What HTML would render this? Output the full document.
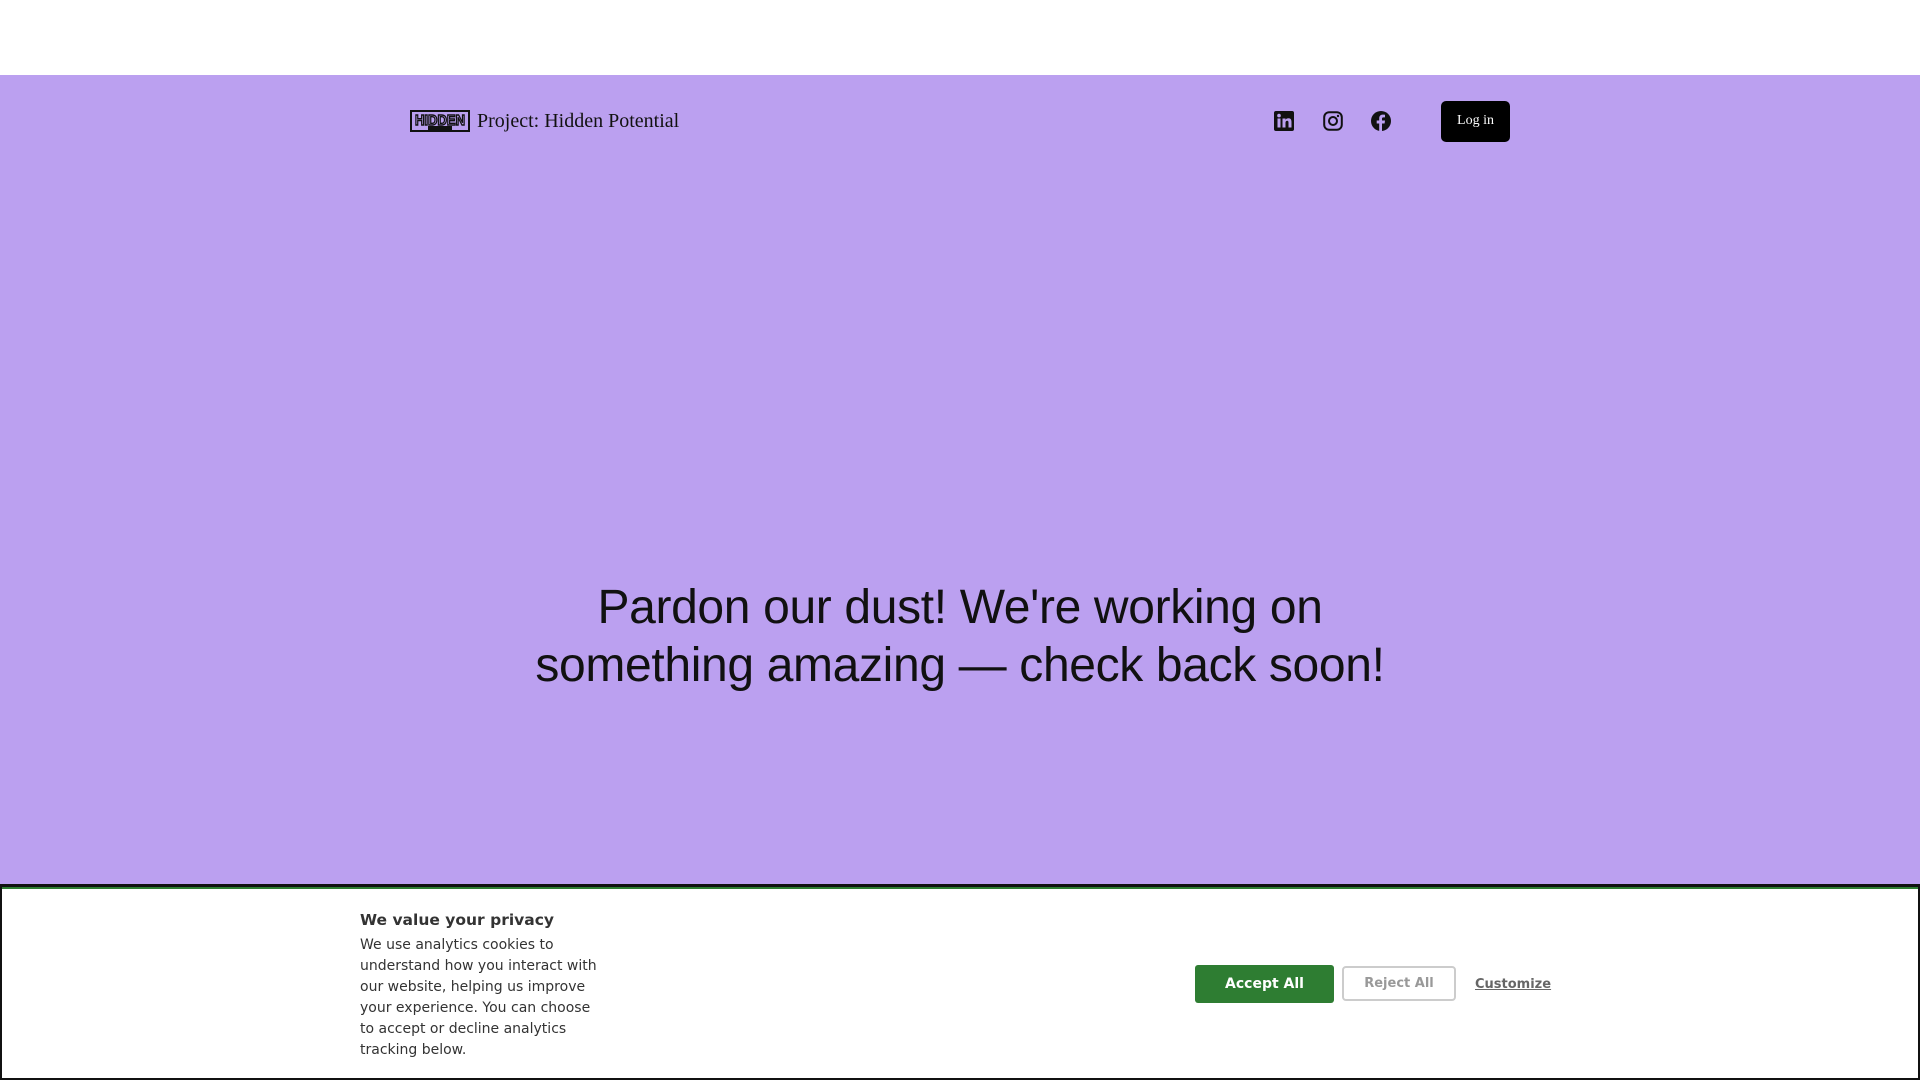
<!DOCTYPE html>
<html><head><meta charset="utf-8"><style>
*{margin:0;padding:0;box-sizing:border-box}
body{width:1920px;height:1080px;overflow:hidden;background:#fff;position:relative;font-family:"Liberation Sans",sans-serif}
.hero{position:absolute;top:75px;left:0;width:1920px;height:812px;background:#bba0f0}
.brand{position:absolute;left:410px;top:109px;display:flex;align-items:center}
.brand span{font-family:"Liberation Serif",serif;font-size:20px;color:#111;margin-left:7px}
.ic{position:absolute;top:111px;width:20px;height:20px}
.login{position:absolute;left:1441px;top:101px;width:69px;height:41px;background:#000;border-radius:5px;color:#fff;font-family:"Liberation Serif",serif;font-size:14px;text-align:center;line-height:40px}
h1{position:absolute;left:0;width:1920px;top:579px;text-align:center;font-weight:400;font-size:48px;line-height:58px;color:#111;letter-spacing:-0.35px}
.banner{position:absolute;left:0;top:884px;width:1920px;height:196px;background:#fff;border:2px solid #111;border-top:3px solid #111;box-shadow:inset 0 2px 0 #2e7d32}
.txt{position:absolute;left:358px;top:24px;width:240px;font-family:"DejaVu Sans",sans-serif;color:#333}
.txt b{display:block;font-size:15.5px;margin-bottom:6px}
.txt p{font-size:14px;line-height:21px}
.btn{position:absolute;font-family:"DejaVu Sans",sans-serif;font-weight:bold;font-size:14px;text-align:center}
</style></head><body>
<div class="hero"></div>
<div class="brand">
<svg width="60" height="24" viewBox="0 0 60 24"><path d="M1 2h58v20H1z" fill="none" stroke="#111" stroke-width="2"/><text x="30" y="16" text-anchor="middle" font-family="Liberation Sans" font-weight="bold" font-size="15" fill="#bba0f0" stroke="#111" stroke-width="1.4" textLength="50" lengthAdjust="spacingAndGlyphs">HIDDEN</text><rect x="18" y="17" width="24" height="4" fill="#111"/></svg>
<span>Project: Hidden Potential</span></div>
<svg class="ic" style="left:1274px" viewBox="0 0 20 20"><rect x="0" y="0" width="20" height="20" rx="2" fill="#111"/><rect x="3.5" y="7.5" width="3" height="9" fill="#bba0f0"/><circle cx="5" cy="4.6" r="1.8" fill="#bba0f0"/><path d="M8.5 7.5h3v1.4c.6-1 1.7-1.6 3-1.6 2.3 0 3 1.5 3 3.8v5.4h-3v-4.8c0-1.1-.3-1.9-1.3-1.9-1 0-1.7.7-1.7 1.9v4.8h-3z" fill="#bba0f0"/></svg>
<svg class="ic" style="left:1323px" viewBox="0 0 20 20"><rect x="1.2" y="1.2" width="17.6" height="17.6" rx="5" fill="none" stroke="#111" stroke-width="2"/><circle cx="10" cy="10" r="4" fill="none" stroke="#111" stroke-width="2"/><circle cx="15" cy="5" r="1.2" fill="#111"/></svg>
<svg class="ic" style="left:1371px" viewBox="0 0 20 20"><circle cx="10" cy="10" r="10" fill="#111"/><path d="M11 20v-7.5h2.6l.4-3H11V7.8c0-.9.3-1.4 1.5-1.4H14V3.7c-.3 0-1.2-.1-2.2-.1-2.2 0-3.6 1.3-3.6 3.7v2.2H5.7v3h2.5V20z" fill="#bba0f0"/></svg>
<div class="login">Log in</div>
<h1>Pardon our dust! We're working on<br>something amazing — check back soon!</h1>
<div class="banner">
<div class="txt"><b>We value your privacy</b><p>We use analytics cookies to understand how you interact with our website, helping us improve your experience. You can choose to accept or decline analytics tracking below.</p></div>
<div class="btn" style="left:1193px;top:78px;width:139px;height:38px;background:#2e7d32;color:#fff;border-radius:3px;line-height:38px">Accept All</div>
<div class="btn" style="left:1340px;top:79px;width:114px;height:35px;border:2px solid #ccc;color:#999;border-radius:4px;line-height:31px;font-size:13px">Reject All</div>
<div class="btn" style="left:1473px;top:88px;color:#666;text-decoration:underline;font-size:13px;line-height:20px">Customize</div>
</div>
</body></html>
